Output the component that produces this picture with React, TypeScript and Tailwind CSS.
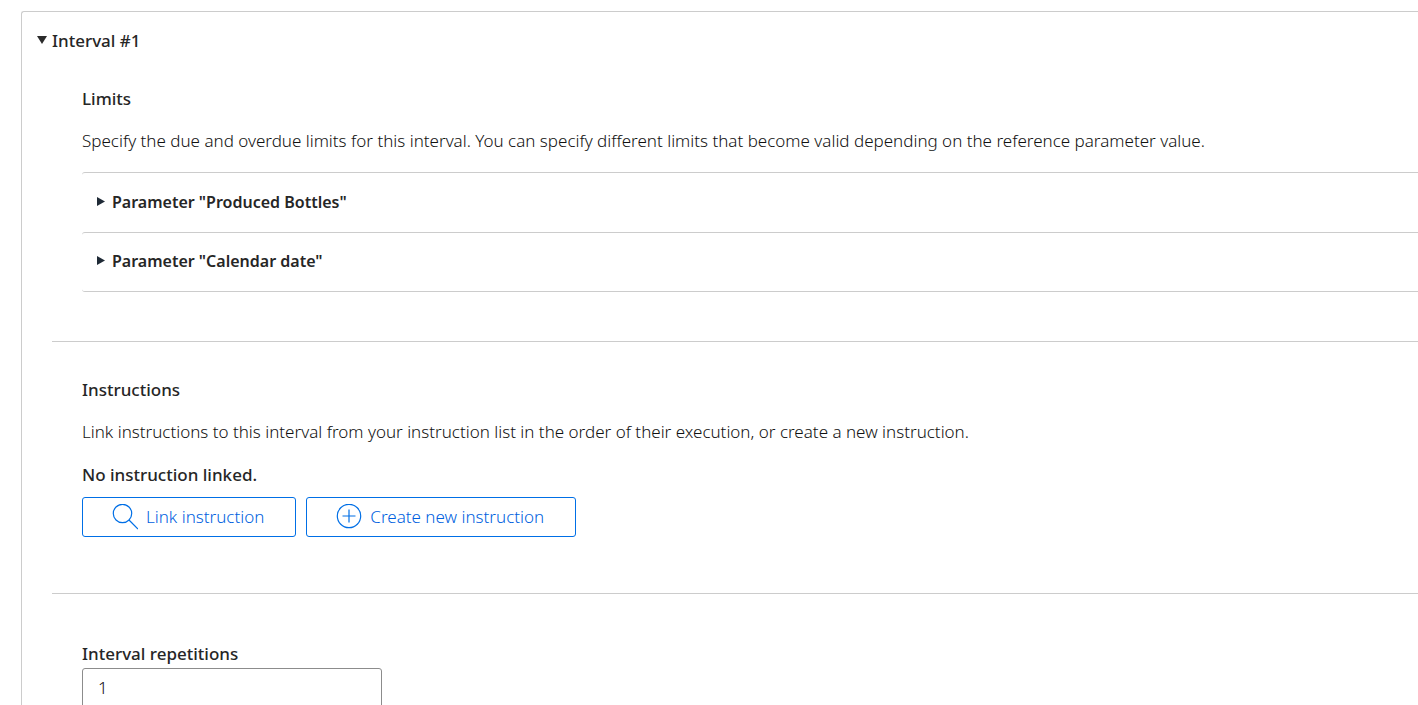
import React, { useState } from "react";

function Heading({ children }: { children: React.ReactNode }) {
  return <h2 className="font-medium">{children}</h2>;
}

function ParameterPanel({ name }: { name: string }) {
  return (
    <details className="group rounded-l-[3px] border-t border-[#cccccc] last:border-b">
      <summary className="flex h-[59px] cursor-pointer list-none items-center gap-1.5 pb-0.5 pl-3.5 text-base font-semibold group-last:h-[58px]">
        <svg className="size-2.5 group-open:rotate-90" viewBox="0 0 10 10" fill="#1f2a36" aria-hidden="true">
          <path d="M1 0 9 4.5 1 9z" />
        </svg>
        Parameter "{name}"
      </summary>
    </details>
  );
}

function OutlineButton({ icon, children }: { icon: React.ReactNode; children: React.ReactNode }) {
  return (
    <button
      type="button"
      className="flex h-10 cursor-pointer items-center gap-2 rounded-[3px] border border-[#006fe6] pr-[31px] pl-[29px] font-light text-[#005fe0]"
    >
      {icon}
      {children}
    </button>
  );
}

const searchIcon = (
  <svg className="size-[26px]" viewBox="0 0 26 26" fill="none" stroke="#006fe6" strokeWidth="1.2" aria-hidden="true">
    <circle cx="10.5" cy="9.5" r="9.2" />
    <path d="M17 16 26 25" />
  </svg>
);

const plusIcon = (
  <svg className="size-[26px]" viewBox="0 0 26 26" fill="none" stroke="#006fe6" strokeWidth="1.2" aria-hidden="true">
    <circle cx="13" cy="12" r="11.7" />
    <path d="M6.5 12h13M13 5.5v13" />
  </svg>
);

export default function App() {
  const [repetitions, setRepetitions] = useState("1");
  return (
    <main className="h-screen overflow-hidden bg-white pt-[11px] pl-[21px] font-['Noto_Sans',sans-serif] text-[17px] leading-6 text-[#262626]">
      <details open className="group/interval rounded-tl-[3px] border-t border-l border-[#cccccc] pt-[17px]">
        <summary className="flex cursor-pointer list-none items-center gap-1 pl-3.5 font-medium">
          <svg
            className="size-3 -rotate-90 group-open/interval:rotate-0"
            viewBox="0 0 12 12"
            fill="#2b2b2b"
            aria-hidden="true"
          >
            <path d="M1 1h10L6 9z" />
          </svg>
          Interval #1
        </summary>
        <div className="pl-[30px]">
          <section className="pt-[34px] pb-[49px] pl-[30px]">
            <Heading>Limits</Heading>
            <p className="mt-[18px] mb-[19px] font-light text-[#111111]">
              Specify the due and overdue limits for this interval. You can specify different limits that become valid
              depending on the reference parameter value.
            </p>
            <div>
              <ParameterPanel name="Produced Bottles" />
              <ParameterPanel name="Calendar date" />
            </div>
          </section>
          <section className="border-t border-[#cccccc] pt-9 pb-14 pl-[30px]">
            <Heading>Instructions</Heading>
            <p className="mt-[18px] font-light text-[#111111]">
              Link instructions to this interval from your instruction list in the order of their execution, or create a
              new instruction.
            </p>
            <p className="mt-[19px] font-medium">No instruction linked.</p>
            <div className="mt-2.5 flex gap-2.5">
              <OutlineButton icon={searchIcon}>Link instruction</OutlineButton>
              <OutlineButton icon={plusIcon}>Create new instruction</OutlineButton>
            </div>
          </section>
          <section className="border-t border-[#cccccc] pt-12 pb-14 pl-[30px]">
            <label htmlFor="repetitions" className="block font-medium">
              Interval repetitions
            </label>
            <input
              id="repetitions"
              inputMode="numeric"
              value={repetitions}
              onChange={(event) => setRepetitions(event.target.value)}
              className="mt-0.5 block h-10 w-[300px] rounded-[3px] border border-[#8c8c8c] px-[15px] pb-0.5 font-light text-[#111111]"
            />
          </section>
        </div>
      </details>
    </main>
  );
}
